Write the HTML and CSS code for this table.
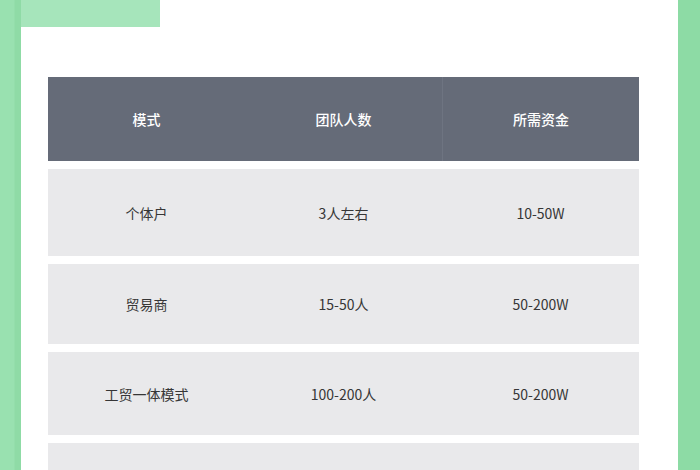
FILE: index.html
```html
<!DOCTYPE html>
<html lang="zh-CN">
<head>
<meta charset="utf-8">
<link rel="stylesheet" href="styles.css">
</head>
<body>
<div class="page">
  <div class="strip strip-left"></div>
  <div class="main">
    <div class="tab"></div>
    <div class="table">
      <div class="row head">
        <div class="cell">模式</div>
        <div class="cell">团队人数</div>
        <div class="cell divided">所需资金</div>
      </div>
      <div class="row r1">
        <div class="cell">个体户</div>
        <div class="cell">3人左右</div>
        <div class="cell">10-50W</div>
      </div>
      <div class="row r2">
        <div class="cell">贸易商</div>
        <div class="cell">15-50人</div>
        <div class="cell">50-200W</div>
      </div>
      <div class="row r3">
        <div class="cell">工贸一体模式</div>
        <div class="cell">100-200人</div>
        <div class="cell">50-200W</div>
      </div>
      <div class="row r4">
        <div class="cell"></div>
        <div class="cell"></div>
        <div class="cell"></div>
      </div>
    </div>
  </div>
  <div class="strip strip-right"></div>
</div>
</body>
</html>
```

FILE: styles.css
```css
html, body {
  margin: 0;
  padding: 0;
  background: #ffffff;
}
body {
  font-family: "Noto Sans CJK SC", "Noto Sans", sans-serif;
  width: 700px;
  height: 470px;
  overflow: hidden;
}
.page {
  display: flex;
  height: 470px;
}
.strip {
  flex: none;
  height: 100%;
}
.strip-left {
  width: 21px;
  background: linear-gradient(to right, #99e1b0 0, #99e1b0 14px, #8fdba6 15px, #8fdba6 21px);
}
.strip-right {
  width: 22px;
  background: #8ddba5;
}
.main {
  flex: 1;
  display: flex;
  flex-direction: column;
  background: #ffffff;
}
.tab {
  width: 139px;
  height: 27px;
  background: #a6e5bb;
  flex: none;
}
.table {
  margin: 50px 0 0 27px;
  width: 591px;
  display: flex;
  flex-direction: column;
  gap: 8px;
}
.row {
  display: grid;
  grid-template-columns: 197px 197px 197px;
  background: #e9e9eb;
  color: #363636;
  font-size: 14px;
}
.cell {
  display: flex;
  align-items: center;
  justify-content: center;
}
.head {
  background: #656b78;
  color: #ffffff;
  font-weight: 500;
  height: 84px;
}
.head .divided {
  border-left: 1px solid #6e7481;
}
.r1 { height: 87px; }
.r2 { height: 80px; }
.r3 { height: 83px; }
.r4 { height: 40px; }
```
